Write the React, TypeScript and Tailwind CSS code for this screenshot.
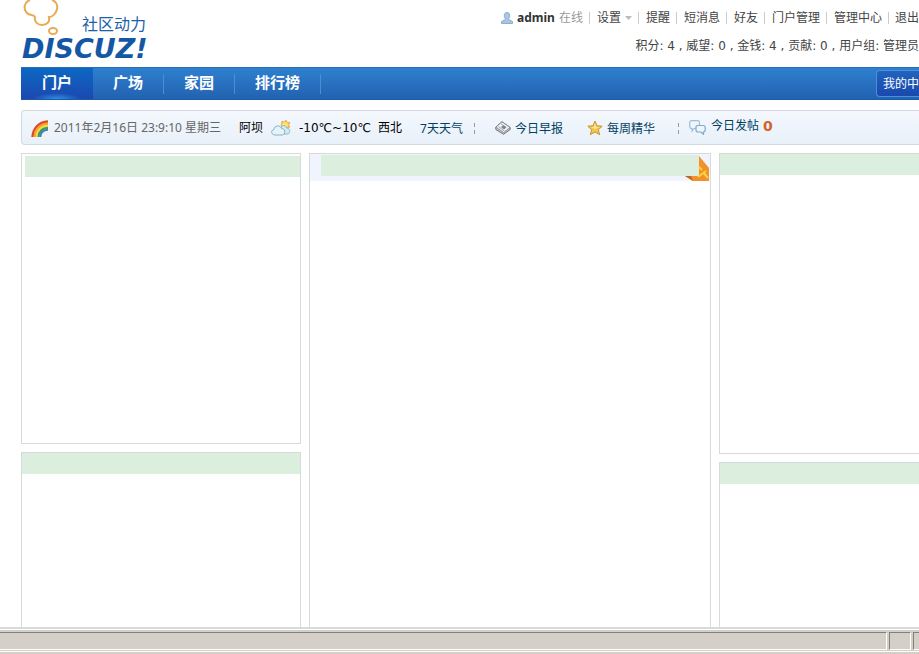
import type { ReactNode } from "react";

const userLinks = ["提醒", "短消息", "好友", "门户管理", "管理中心"];
const navItems = ["广场", "家园", "排行榜"];

function Logo() {
  return (
    <a href="#" aria-label="Discuz! 社区动力" className="block shrink-0">
      <svg width="140" height="66" viewBox="0 0 140 66" fill="none">
        <path
          d="M9 0C3 2 2 9 6 13C9 16 13 14 14 17C13 22 17 25 21 25C26 25 29 22 28 17C31 17 35 14 36 9C37 4 34 1 31 0"
          stroke="#e8ab52"
          strokeWidth="2"
        />
        <ellipse cx="32" cy="31" rx="4" ry="3" stroke="#e8ab52" strokeWidth="2" />
        <text x="61" y="30" fontSize="16" fill="#1c62a8" fontFamily="Noto Sans CJK SC, sans-serif">
          社区动力
        </text>
        <text x="1" y="58" fontSize="27" fontWeight="bold" fontStyle="italic" fill="#1457a5" fontFamily="DejaVu Sans, sans-serif">
          DISCUZ!
        </text>
      </svg>
    </a>
  );
}

function UserIcon() {
  return (
    <svg width="12" height="12" viewBox="0 0 12 12" className="mr-1">
      <path d="M6 .5C8 .5 9 2 8.700 4.500C8.500 6 7.500 6.500 7.500 7.500L11.500 9.500V11.500H.5V9.500L4.500 7.500C4.500 6.500 3.500 6 3.300 4.500C3 2 4 .5 6 .5Z" fill="#a9c5e2" stroke="#7ba0c8" strokeWidth=".8" />
    </svg>
  );
}

function RainbowIcon() {
  return (
    <svg width="17" height="17" viewBox="0 0 17 17" fill="none" className="shrink-0">
      <path d="M1.500 17C2 9 7 2 17 1.500" stroke="#dd4a26" strokeWidth="2.400" />
      <path d="M3.700 17C4 10 9 4 17 3.700" stroke="#f5a02a" strokeWidth="2.400" />
      <path d="M5.700 17C6 11 10 6.200 17 5.900" stroke="#f2dc4e" strokeWidth="2.200" />
      <path d="M7.500 17C8 12 11 8.200 17 7.900" stroke="#3fa04a" strokeWidth="2.200" />
      <path d="M9.300 17C9.500 13 12 10 17 9.800" stroke="#3f7fc4" strokeWidth="2" />
    </svg>
  );
}

function WeatherIcon() {
  return (
    <svg width="20" height="17" viewBox="0 0 20 17" className="shrink-0">
      <path d="M11 1L13 2L15 0L16 2.500L19 2.500L17.500 5L19 7L17 8L16 10L10 6Z" fill="#f8b944" stroke="#e99a35" strokeWidth=".6" />
      <circle cx="14" cy="5" r="3" fill="#fce07a" />
      <path d="M10 8C11 4.500 15 5 15.500 8C19 8 20 12.500 17 14H9Z" fill="#d3e9f3" stroke="#7fb2cd" strokeWidth=".9" />
      <path d="M4 15C0 15-.5 10 3 9.500C3 5.500 9 4.500 10.500 8.500C14 8 15 14 11.500 15Z" fill="#e6f4fa" stroke="#7fb2cd" strokeWidth="1" />
    </svg>
  );
}

function NewsIcon() {
  return (
    <svg width="16" height="14" viewBox="0 0 16 14" className="shrink-0">
      <path d="M.8 6L7 .7L15.200 6.500V8.500L8.500 13.300L.8 8.500Z" fill="#c3c5ca" stroke="#666970" strokeWidth=".9" />
      <path d="M1 6L7 .8L15 6.500L8.500 11.500Z" fill="#f2f2f4" stroke="#7d8088" strokeWidth=".8" />
      <path d="M6 6L8.500 4L11.500 6.300L9 8.500Z" fill="#77859f" />
      <path d="M3.500 5.500L9 9.800M6 2.800L8 4.200" stroke="#94979e" strokeWidth=".9" />
    </svg>
  );
}

function StarIcon() {
  return (
    <svg width="16" height="16" viewBox="0 0 16 16" className="shrink-0">
      <path d="M8 1L10 5.800L15.200 6.200L11.300 9.700L12.700 14.700L8 12L3.300 14.700L4.700 9.700L.8 6.200L6 5.800Z" fill="#f3c648" stroke="#c99338" strokeWidth="1" strokeLinejoin="round" />
      <path d="M8 3L9.200 6.800L12.500 7.200L8 9L4 7.200L7 6.800Z" fill="#fce694" />
    </svg>
  );
}

function ChatIcon() {
  return (
    <svg width="17" height="15" viewBox="0 0 17 15" fill="#eef6fc" strokeWidth="1.200" className="shrink-0">
      <path d="M3 .7H8.500Q10.500.7 10.500 2.700V6.500Q10.500 8.500 8.500 8.500H5L3 11V8.500Q.7 8.500.7 6.500V2.700Q.7.7 3 .7Z" stroke="#9fbdd6" />
      <path d="M9 5.500H14Q16.200 5.500 16.200 7.500V10Q16.200 12 14.500 12V14.300L12 12H9Q7 12 7 10V7.500Q7 5.500 9 5.500Z" stroke="#7fa8cc" />
    </svg>
  );
}

function BadgeCorner() {
  return (
    <svg width="24" height="27" viewBox="0 0 24 27" className="absolute right-px top-0">
      <path d="M0 22L8 27H24V14L14 2V22Z" fill="#f2912b" />
      <path d="M0 22H6L8 27Z" fill="#b9682a" />
      <path d="M14 13L17 16M13 23L21 17M18 18L23 24" fill="none" stroke="#fbd23f" strokeWidth="2" />
    </svg>
  );
}

function Divider({ className = "" }: { className?: string }) {
  return (
    <span className={`flex h-[11px] flex-col justify-between ${className}`}>
      <i className="h-1 w-px bg-[#999]" />
      <i className="h-1 w-px bg-[#999]" />
    </span>
  );
}

function Panel({ className = "", children }: { className?: string; children?: ReactNode }) {
  return <section className={`border border-[#d5dadb] bg-white ${className}`}>{children}</section>;
}

function PanelTitle() {
  return <div className="h-[21px] bg-[#dceede]" />;
}

function Header() {
  return (
    <header className="flex h-[67px] items-start justify-between">
      <Logo />
      <div className="text-[#444]">
        <div className="mt-[9px] flex h-[18px] items-center justify-end whitespace-nowrap">
          <UserIcon />
          <a href="#" className="font-bold text-[#333]">admin</a>
          <span className="ml-1 mr-[6px] text-[#999]">在线</span>
          <button className="flex h-3 items-center border-l border-[#ccc] pl-[7px] pr-[6px]">
            设置
            <svg width="7" height="4" viewBox="0 0 7 4" className="ml-1">
              <path d="M0 0H7L3.500 4Z" fill="#bbb" />
            </svg>
          </button>
          {userLinks.map((link) => (
            <a key={link} href="#" className="flex h-3 items-center border-l border-[#ccc] pl-[7px] pr-[6px]">
              {link}
            </a>
          ))}
          <a href="#" className="flex h-3 items-center border-l border-[#ccc] pl-[6px]">退出</a>
        </div>
        <p className="mt-[10px] whitespace-nowrap text-right font-['DejaVu_Sans','Noto_Sans_CJK_SC',sans-serif] leading-[18px]">
          积分: 4 , 威望: 0 , 金钱: 4 , 贡献: 0 , 用户组: 管理员
        </p>
      </div>
    </header>
  );
}

function NavBar() {
  return (
    <nav className="flex h-[33px] items-center border-b border-t border-b-[#1f5c9f] border-t-[#2a6fae] bg-linear-to-b from-[#2e80d0] to-[#2262b0] text-[15px] font-bold text-white">
      <a
        href="#"
        className="flex h-full w-[72px] items-center justify-center bg-[radial-gradient(24px_6px_at_bottom,#2f8fe8_0%,transparent_100%),linear-gradient(#0c68c4,#1c48b0)] pb-[3px]"
      >
        门户
      </a>
      {navItems.map((item) => (
        <a key={item} href="#" className="flex h-5 items-center border-r border-[#4b8fd3] px-5 pb-[3px]">
          {item}
        </a>
      ))}
      <button className="ml-auto h-[27px] whitespace-nowrap rounded-l-sm border border-r-0 border-[#4a90dc] bg-linear-to-b from-[#2163bd] to-[#1a48ae] pl-[6px] text-left text-xs font-normal">
        我的中
      </button>
    </nav>
  );
}

function InfoBar() {
  return (
    <div className="mt-[10px] flex h-[35px] items-center whitespace-nowrap rounded-l-sm border border-r-0 border-[#cfdae2] bg-linear-to-b from-[#f4f8fd] to-[#e8f0f9] pl-[9px] pt-px text-[#004164]">
      <RainbowIcon />
      <span className="ml-[6px] w-[173px] text-[#666]">2011年2月16日 23:9:10 星期三</span>
      <span className="ml-3 text-black">阿坝</span>
      <span className="ml-2 flex"><WeatherIcon /></span>
      <span className="ml-2 w-[72px] font-['DejaVu_Sans','Noto_Sans_CJK_SC',sans-serif] text-black">-10℃~10℃</span>
      <span className="ml-[7px] text-black">西北</span>
      <a href="#" className="ml-[18px] pt-px">7天天气</a>
      <Divider className="ml-[11px]" />
      <a href="#" className="ml-5 flex items-center gap-1">
        <NewsIcon />
        <span className="pt-px">今日早报</span>
      </a>
      <a href="#" className="ml-6 flex items-center gap-1">
        <StarIcon />
        <span className="pt-px">每周精华</span>
      </a>
      <Divider className="ml-[23px]" />
      <a href="#" className="ml-[10px] flex items-center gap-1 pb-[5px]">
        <span className="mr-px flex pt-[3px]"><ChatIcon /></span>
        今日发帖
        <em className="font-['DejaVu_Sans',sans-serif] text-sm leading-4 font-bold not-italic text-[#d3632a]">0</em>
      </a>
    </div>
  );
}

function StatusBar() {
  return (
    <footer className="shrink-0 border-t-2 border-[#d8dcd8] bg-[#d4d0c8]">
      <div className="flex h-[23px] gap-[2px] border-y border-white pb-px pt-[2px]">
        <div className="flex-1 border-b border-r border-t border-b-white border-r-white border-t-[#808080]" />
        <div className="w-[22px] border border-b-white border-l-[#808080] border-r-white border-t-[#808080]" />
        <div className="w-[6px] border border-r-0 border-b-white border-l-[#808080] border-t-[#808080]" />
      </div>
      <div className="h-[2px]" />
    </footer>
  );
}

export default function App() {
  return (
    <div className="flex h-screen flex-col overflow-hidden bg-white font-['Noto_Sans','Noto_Sans_CJK_SC',sans-serif] text-xs">
      <div className="flex min-h-0 flex-1 flex-col pl-[21px]">
        <Header />
        <NavBar />
        <InfoBar />
        <main className="mt-2 flex min-h-0 flex-1 gap-2">
          <div className="flex w-[280px] flex-col gap-2">
            <Panel className="h-[291px] pl-[3px] pt-[2px]">
              <PanelTitle />
            </Panel>
            <Panel className="flex-1 border-b-0">
              <PanelTitle />
            </Panel>
          </div>
          <Panel className="relative w-[402px] border-b-0">
            <div className="h-[27px] bg-[#f0f5fd] pl-[11px] pr-[11px] pt-px">
              <PanelTitle />
            </div>
            <BadgeCorner />
          </Panel>
          <div className="flex flex-1 flex-col gap-2">
            <Panel className="h-[301px] border-r-0">
              <PanelTitle />
            </Panel>
            <Panel className="flex-1 border-b-0 border-r-0">
              <PanelTitle />
            </Panel>
          </div>
        </main>
      </div>
      <StatusBar />
    </div>
  );
}
